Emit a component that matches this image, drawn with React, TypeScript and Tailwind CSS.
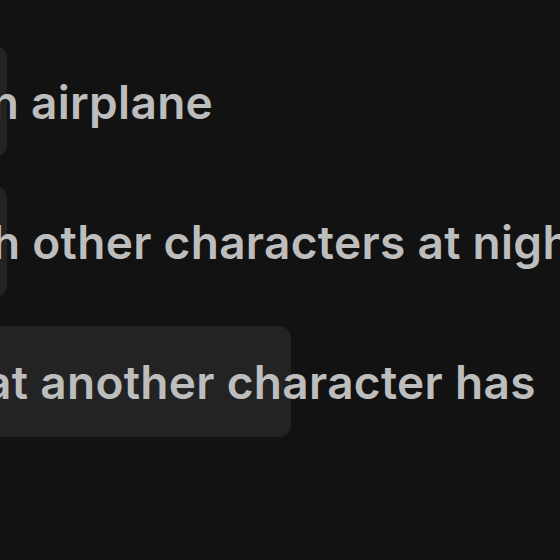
const rows = [
  { text: "an airplane", shift: "-ml-[36px]", box: "w-[207px]" },
  { text: "with other characters at night", shift: "-ml-[76px]", box: "w-[207px]" },
  { text: "that another character has", shift: "-ml-[60px]", box: "w-[491px]" },
];

export default function App() {
  return (
    <div className="h-[560px] w-[560px] overflow-hidden bg-[#121212] font-['Inter',sans-serif]">
      <div className="flex flex-col gap-[29px] pt-[46px]">
        {rows.map((row) => (
          <div key={row.text} className="relative flex h-[111px] items-center">
            <div className={`absolute left-[-200px] top-0 h-full rounded-xl bg-[#232323] ${row.box}`} />
            <span
              className={`relative whitespace-nowrap text-[46px] font-semibold leading-none tracking-[0.3px] text-[#bdbdbd] ${row.shift}`}
            >
              {row.text}
            </span>
          </div>
        ))}
      </div>
    </div>
  );
}
